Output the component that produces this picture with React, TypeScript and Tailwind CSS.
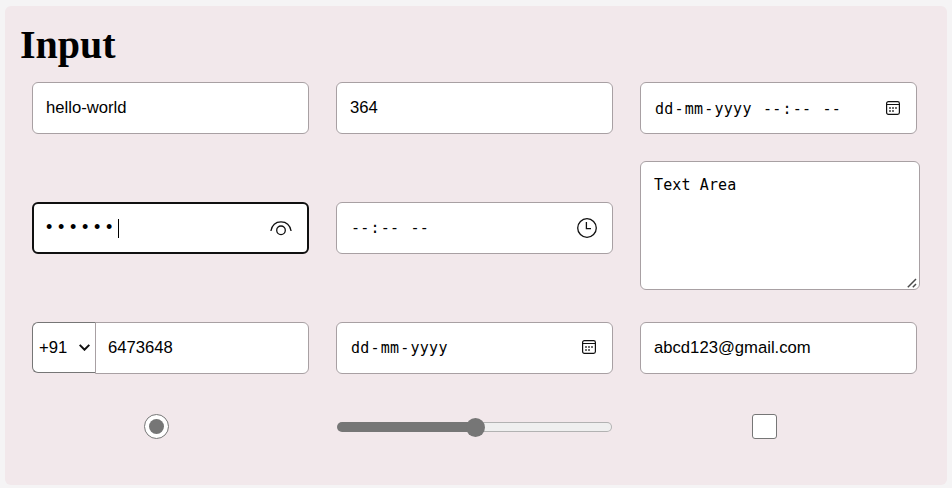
import type { ReactNode } from "react";

const field =
  "flex h-[52px] w-[277px] items-center rounded-[6px] border border-[#a8a0a3] bg-white text-[16.67px] leading-[20px] text-black";
const mono =
  "font-['DejaVu_Sans_Mono',monospace] text-[15px] leading-[20px] whitespace-pre";

function CalendarIcon() {
  return (
    <svg width="14" height="14" viewBox="0 0 14 14" fill="none" stroke="#101010">
      <rect x="0.6" y="0.6" width="12.8" height="12.8" rx="1.8" strokeWidth="1.2" />
      <path d="M1 3.500h12" strokeWidth="1" />
      <path d="M3.200 7h1.600M6.200 7h1.600M9.200 7h1.600M3.200 10h1.600M6.200 10h1.600" strokeWidth="1.500" />
    </svg>
  );
}

function ClockIcon() {
  return (
    <svg width="20" height="20" viewBox="0 0 20 20" fill="none" stroke="#101010" strokeWidth="1.3">
      <circle cx="10" cy="10" r="9.3" />
      <path d="M9.4 4v6.600h4.6" />
    </svg>
  );
}

function EyeIcon() {
  return (
    <svg width="22" height="16" viewBox="0 0 22 16" fill="none" stroke="#101010" strokeWidth="1.3">
      <path d="M0.9 11C2 5.200 6 1.900 11 1.900S20 5.200 21.100 11" />
      <circle cx="11" cy="10.300" r="4.300" />
    </svg>
  );
}

function Segment({ children }: { children: ReactNode }) {
  return <span className="px-px">{children}</span>;
}

function DateSegments() {
  return (
    <>
      <Segment>dd</Segment>-<Segment>mm</Segment>-<Segment>yyyy</Segment>
    </>
  );
}

function TimeSegments() {
  return (
    <>
      <Segment>--</Segment>:<Segment>--</Segment> <Segment>--</Segment>
    </>
  );
}

export default function App() {
  return (
    <div className="h-[488px] w-[952px] bg-[#f5f4f5] px-[5px] pt-[6px] font-['Liberation_Sans',Arial,sans-serif]">
      <main className="h-[479px] w-[942px] rounded-[6px] bg-[#f2e8eb] px-[15px] pt-[15px]">
        <h1 className="h-[61px] font-['Liberation_Serif',serif] text-[40px] leading-[48px] font-bold text-black">
          Input
        </h1>
        <div className="grid grid-cols-[277px_277px_280px] grid-rows-[52px_129px_52px_26px] gap-x-[27px] pl-[12px]">
          <div className={`${field} pl-[13px]`}>hello-world</div>
          <div className={`${field} pl-[13px]`}>364</div>
          <div className={`${field} justify-between pr-[16px] pl-[13px]`}>
            <span className={`${mono} pt-[2px] tracking-[0.23px]`}>
              <DateSegments /> <TimeSegments />
            </span>
            <CalendarIcon />
          </div>

          <div className="mt-[68px] flex h-[52px] w-[277px] items-center rounded-[6px] border-2 border-[#101010] bg-white pr-[15px] pl-[12px]">
            <span className="pb-[3px] text-[18px] leading-[20px] tracking-[5.7px]">••••••</span>
            <span className="h-[19px] w-px bg-black" />
            <span className="ml-auto">
              <EyeIcon />
            </span>
          </div>
          <div className={`${field} mt-[68px] justify-between pr-[15px] pl-[13px]`}>
            <span className={`${mono} tracking-[0.23px]`}>
              <TimeSegments />
            </span>
            <ClockIcon />
          </div>
          <div className="mt-[27px] flex h-[129px] w-[280px] justify-between rounded-[6px] border border-[#a8a0a3] bg-white pt-[13px] pr-[2px] pb-px pl-[13px]">
            <span className={`${mono} tracking-[0.12px]`}>Text Area</span>
            <svg className="self-end" width="10" height="10" viewBox="0 0 10 10" stroke="#4b4b4b" strokeWidth="1.5">
              <path d="M0.800 9.200 9 1M5.800 9.200 9 6" />
            </svg>
          </div>

          <div className="mt-[59px] flex h-[52px] w-[277px]">
            <div className="flex h-[51px] w-[64px] items-center justify-between rounded-l-[6px] border border-r-0 border-[#767676] bg-white pr-[6px] pl-[6px] text-[16.67px]">
              <span>+91</span>
              <svg width="11" height="7" viewBox="0 0 11 7" fill="none" stroke="#101010" strokeWidth="2">
                <path d="m0.700 0.900 4.800 4.800 4.800-4.800" />
              </svg>
            </div>
            <div className="-ml-px flex h-[52px] w-[214px] items-center rounded-r-[6px] border border-[#a8a0a3] bg-white pb-px pl-[12px] text-[16.67px] leading-[20px]">
              6473648
            </div>
          </div>
          <div className={`${field} mt-[59px] justify-between pr-[16px] pl-[13px]`}>
            <span className={`${mono} tracking-[0.23px]`}>
              <DateSegments />
            </span>
            <span className="pb-[2px]">
              <CalendarIcon />
            </span>
          </div>
          <div className={`${field} mt-[59px] pl-[13px]`}>abcd123@gmail.com</div>

          <div className="mt-[98px] flex h-[26px] w-[249px] items-center justify-center">
            <span className="flex size-[25px] items-center justify-center rounded-full border border-[#767676] bg-white">
              <span className="size-[15px] rounded-full bg-[#767676]" />
            </span>
          </div>
          <div className="mt-[99px] flex h-[26px] w-[277px] items-center">
            <span className="ml-px h-[10px] w-[132px] rounded-l-full bg-[#767676]" />
            <span className="relative z-10 -ml-[3px] size-[19px] rounded-full bg-[#767676]" />
            <span className="-ml-[4px] h-[10px] w-[131px] rounded-r-full border border-l-0 border-[#b2b2b2] bg-[#efefef]" />
          </div>
          <div className="mt-[98px] flex h-[26px] w-[249px] items-center justify-center">
            <span className="size-[25px] rounded-[3px] border border-[#767676] bg-white" />
          </div>
        </div>
      </main>
    </div>
  );
}
